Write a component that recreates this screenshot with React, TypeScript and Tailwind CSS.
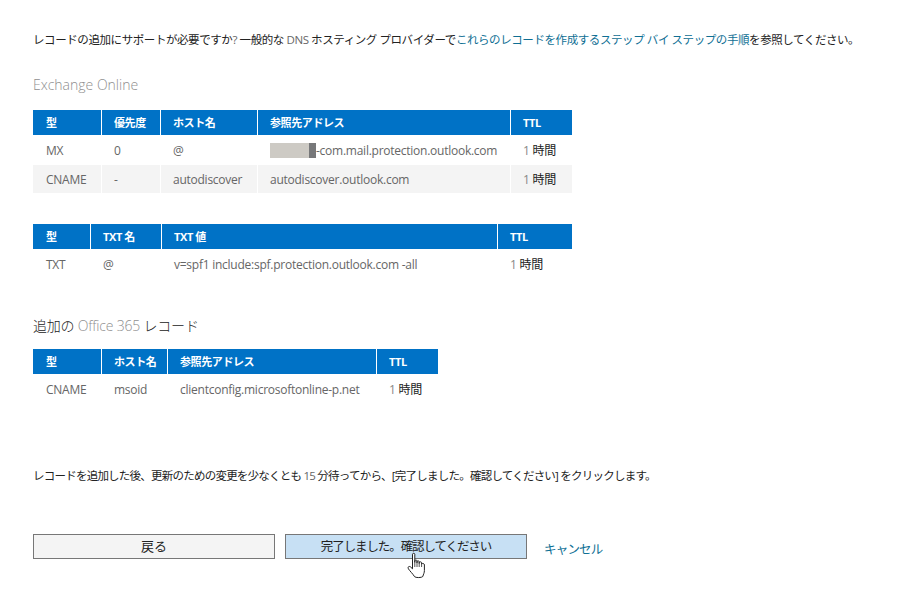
import React from "react";

const G = ({ children }: { children: React.ReactNode }) => <span className="text-[#666666]">{children}</span>;
const Hour = () => (
  <span className="text-[#222222]"><span className="text-[#888888]">1</span> 時間</span>
);

function Table({ cols, head, rows, width }: { cols: number[]; head: string[]; rows: React.ReactNode[][]; width: number }) {
  return (
    <table className="table-fixed border-separate border-spacing-0" style={{ width }}>
      <colgroup>
        {cols.map((c, i) => <col key={i} style={{ width: c }} />)}
      </colgroup>
      <thead>
        <tr>
          {head.map((h, i) => (
            <th key={i} className="h-[25px] bg-[#0072c6] pl-[12px] first:pl-[13px] pr-0 pt-[1px] text-left align-middle text-[11px] tracking-[-0.4px] font-bold text-white border-r border-white last:border-r-0">
              {h}
            </th>
          ))}
        </tr>
      </thead>
      <tbody>
        {rows.map((r, ri) => (
          <tr key={ri}>
            {r.map((c, i) => (
              <td key={i} className={`pl-[12px] first:pl-[13px] pr-0 pt-[1px] align-middle whitespace-nowrap text-[12px] tracking-[-0.25px] text-[#666666] border-r border-white last:border-r-0 ${ri === 1 ? "h-[28px] bg-[#f4f4f4]" : "h-[30px] bg-white"}`}>
                {c}
              </td>
            ))}
          </tr>
        ))}
      </tbody>
    </table>
  );
}

export default function App() {
  return (
    <div className="relative h-[611px] w-[917px] overflow-hidden bg-white pl-[33px] pt-[31px] text-black font-['Open_Sans','Noto_Sans_CJK_JP',sans-serif]">
      <p className="h-[18px] whitespace-nowrap text-[11.5px] leading-[18px] tracking-[-0.42px] text-[#222222]">
        レコードの追加にサポートが必要ですか<span className="text-[#666666]">?</span> 一般的な <G>DNS</G> ホスティング プロバイダーで<span className="text-[#0f6f94]">これらのレコードを作成するステップ バイ ステップの手順</span>を参照してください。
      </p>

      <h2 className="mt-[26px] h-[20px] text-[14px] font-light leading-[20px] text-[#8f8f8f]">Exchange Online</h2>

      <div className="mt-[15px]">
        <Table
          width={539}
          cols={[69, 59, 97, 253, 61]}
          head={["型", "優先度", "ホスト名", "参照先アドレス", "TTL"]}
          rows={[
            ["MX", "0", "@", <span className="flex items-center"><span className="h-[15px] w-[39px] bg-[#cdcac4]" /><span className="h-[15px] w-[7px] bg-[#77787a]" />-com.mail.protection.outlook.com</span>, <Hour />],
            ["CNAME", "-", "autodiscover", "autodiscover.outlook.com", <Hour />],
          ]}
        />
      </div>

      <div className="mt-[31px]">
        <Table
          width={539}
          cols={[58, 71, 336, 74]}
          head={["型", "TXT 名", "TXT 値", "TTL"]}
          rows={[["TXT", "@", "v=spf1 include:spf.protection.outlook.com -all", <Hour />]]}
        />
      </div>

      <h2 className="mt-[36px] h-[22px] text-[14px] tracking-[-0.2px] font-light leading-[22px] text-[#222222]">
        追加の <span className="text-[#8f8f8f]">Office 365</span> レコード
      </h2>

      <div className="mt-[12px]">
        <Table
          width={405}
          cols={[69, 66, 209, 61]}
          head={["型", "ホスト名", "参照先アドレス", "TTL"]}
          rows={[["CNAME", "msoid", "clientconfig.microsoftonline-p.net", <Hour />]]}
        />
      </div>

      <p className="mt-[63px] h-[18px] whitespace-nowrap text-[11.5px] leading-[18px] tracking-[-0.77px] text-[#222222]">
        レコードを追加した後、更新のための変更を少なくとも <G>15</G> 分待ってから、[完了しました。確認してください] をクリックします。
      </p>

      <div className="mt-[48px] flex items-center">
        <button className="h-[25px] w-[242px] border border-[#777777] bg-[#f4f4f4] text-[13px] leading-none text-[#222222]">戻る</button>
        <button className="ml-[10px] h-[25px] w-[242px] border border-[#777777] bg-[#c7e0f4] pt-[2px] text-[12.5px] tracking-[-1.1px] leading-none text-[#222222]">完了しました。確認してください</button>
        <span className="ml-[17px] pt-[8px] text-[12.5px] tracking-[-0.8px] text-[#0f6f94]">キャンセル</span>
      </div>

      <svg className="absolute left-[407px] top-[552px]" width="20" height="27" viewBox="0 0 20 27" fill="none">
        <path
          d="M5.5 2.2C5.5 1 7.8 1 7.8 2.2V10.5V8.8C7.8 7.8 10 7.8 10 8.8V11V9.6C10 8.6 12.2 8.6 12.2 9.6V11.6V10.6C12.2 9.6 14.6 9.6 14.6 10.6V12C15.6 11 17.4 11.4 17.4 13V18.5C17.4 21 16.4 22.2 15.8 24.5C15 25.8 8.5 26 7.5 24.6C6 22 2.8 19 1.4 16.8C0.4 15 2 13.8 3.4 14.8L5.5 16.8V2.2Z"
          fill="white"
          stroke="#222222"
          strokeWidth="1"
          strokeLinejoin="round"
        />
        <path d="M7.8 10.5V15M10 11V15M12.2 11.6V15M14.6 12V15" stroke="#222222" strokeWidth="0.8" />
      </svg>
    </div>
  );
}
